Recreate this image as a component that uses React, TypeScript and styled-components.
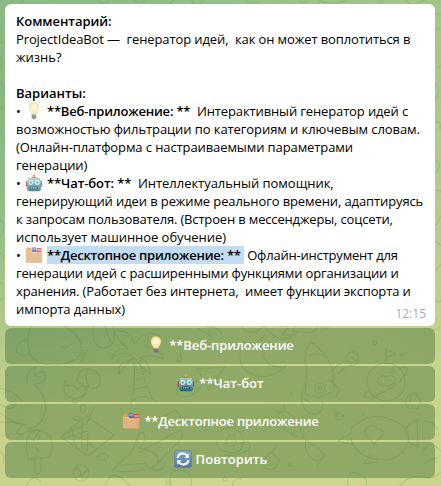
import React from "react";
import styled, { createGlobalStyle } from "styled-components";

const GlobalStyle = createGlobalStyle`
  * { box-sizing: border-box; }
  body { margin: 0; overflow: hidden; }
`;

const Chat = styled.main`
  position: relative;
  width: 441px;
  height: 486px;
  overflow: hidden;
  padding: 4px 6px 8px 5px;
  font: 13px/18px "Open Sans", "Noto Sans", sans-serif;
  color: #000;
  background:
    radial-gradient(ellipse 360px 330px at 0 90px, rgba(134, 182, 132, 0.95), rgba(134, 182, 132, 0)),
    radial-gradient(ellipse 400px 280px at 230px 450px, #d0d68d 0%, rgba(208, 214, 141, 0.85) 45%, rgba(208, 214, 141, 0) 100%),
    linear-gradient(165deg, #99c08a 0%, #b2cb8c 50%, #bccd8b 100%);
`;

const Wallpaper = styled.svg`
  position: absolute;
  inset: 0;
  fill: none;
  stroke: #6d9650;
  stroke-opacity: 0.25;
  stroke-width: 1.15;
  stroke-linecap: round;
  stroke-linejoin: round;
`;

const Message = styled.article`
  position: relative;
  display: flex;
  flex-direction: column;
`;

const Bubble = styled.section`
  display: flex;
  flex-direction: column;
  height: 322px;
  padding: 8px 9px 0 11px;
  border-radius: 6px;
  background: #fff;
`;

const Line = styled.div<{ $track?: number }>`
  display: flex;
  height: 18px;
  white-space: pre;
  letter-spacing: ${({ $track = 0 }) => $track}px;
`;

const Strong = styled.strong<{ $selected?: boolean; $width?: number; $track?: number }>`
  font-weight: 600;
  flex: none;
  width: ${({ $width }) => ($width ? `${$width}px` : "auto")};
  letter-spacing: ${({ $track = 0 }) => $track}px;
  background: ${({ $selected }) => ($selected ? "#c2dcf2" : "transparent")};
`;

const Bullet = styled.span`
  flex: none;
  width: 9px;
`;

const Emoji = styled.svg<{ $faded?: boolean }>`
  flex: none;
  width: 18px;
  height: 18px;
  opacity: ${({ $faded }) => ($faded ? 0.8 : 1)};
`;

const InlineEmoji = styled.span`
  display: flex;
  flex: none;
  width: 22px;
`;

const LastLine = styled.div`
  display: flex;
  justify-content: space-between;
`;

const Time = styled.time`
  height: 18px;
  padding-top: 5px;
  font-size: 12px;
  color: #a0acb6;
`;

const Keyboard = styled.nav`
  display: flex;
  flex-direction: column;
  gap: 2px;
  margin-top: 2px;
`;

const Key = styled.button<{ $track?: number }>`
  display: flex;
  align-items: center;
  justify-content: center;
  gap: 4px;
  height: 36px;
  padding: 0 0 2px 1px;
  border: 0;
  border-radius: 6px;
  background: rgba(69, 115, 58, 0.45);
  color: #fff;
  font: 600 13px/18px "Open Sans", "Noto Sans", sans-serif;
  letter-spacing: ${({ $track = 0 }) => $track}px;
  white-space: pre;
`;

type IconProps = { faded?: boolean };

const Bulb = ({ faded }: IconProps) => (
  <Emoji viewBox="0 0 18 18" $faded={faded}>
    <defs>
      <radialGradient id="glow">
        <stop offset="0" stopColor="#fffdf0" />
        <stop offset=".6" stopColor="#fff1c2" />
        <stop offset="1" stopColor="#f0d08c" />
      </radialGradient>
    </defs>
    <path d="M9 .3C5.8.3 3.8 2.5 3.8 5.3c0 2.9 2.4 4.3 2.9 7.4h4.6c.5-3.1 2.9-4.5 2.9-7.4C14.2 2.5 12.2.3 9 .3Z" fill="url(#glow)" />
    <path d="M7.8 12.3 7.4 8l1.6.8 1.6-.8-.4 4.3" fill="none" stroke="#f0cf8c" strokeWidth=".5" />
    <path d="M6.7 12.5h4.6v3L10 17.2H8l-1.3-1.7Z" fill="#898989" />
    <path d="M6.8 14h4.4M7 15.7h4" stroke="#595f66" strokeWidth=".6" />
  </Emoji>
);

const Robot = ({ faded }: IconProps) => (
  <Emoji viewBox="0 0 18 18" $faded={faded}>
    <defs>
      <linearGradient id="metal" x1="0" y1="0" x2="0" y2="1">
        <stop offset="0" stopColor="#a6cbd0" />
        <stop offset=".6" stopColor="#599ba4" />
        <stop offset="1" stopColor="#236678" />
      </linearGradient>
    </defs>
    <rect x=".8" y="7" width="2" height="6" rx="1" fill="#b84942" />
    <rect x="15.2" y="7" width="2" height="6" rx="1" fill="#b84942" />
    <path d="M6.2 4 8 2.5h2L11.8 4Z" fill="#d74c3d" />
    <circle cx="9" cy="1.6" r="1.4" fill="#f4a52d" />
    <path d="M3.5 3.8h11l1.4 3v8.6l-1.7 1.8H3.8l-1.7-1.8V6.8Z" fill="url(#metal)" />
    <circle cx="5.8" cy="8.5" r="2.4" fill="#d8f2ee" />
    <circle cx="12.2" cy="8.5" r="2.4" fill="#d8f2ee" />
    <circle cx="5.8" cy="8.5" r="1.2" fill="#36bac0" />
    <circle cx="12.2" cy="8.5" r="1.2" fill="#36bac0" />
    <path d="m9 9.5-1.2 2h2.4Z" fill="#dd4d47" />
    <rect x="5" y="12.6" width="8" height="2.6" rx=".8" fill="#214f5c" />
    <path d="M6 13.9h6" stroke="#d7e5e5" strokeDasharray="1.2 .6" />
  </Emoji>
);

const Folder = ({ faded }: IconProps) => (
  <Emoji viewBox="0 0 18 18" $faded={faded}>
    <path d="M1.2 3 2.4 1.5h3L6.5 3v4H1.2Z" fill="#ed9e4d" />
    <path d="M6.8 3V1.5h4.5V3l1 3H6.8Z" fill="#5669c6" />
    <path d="M11.7 2h4.8v5h-4.8Z" fill="#e9524d" />
    <path d="M7.2 3h4m1.2 1H16" stroke="#d7dced" strokeWidth=".8" />
    <path d="M.8 5h6l1 1.5h9.4v10H.8Z" fill="#dfb181" />
    <path d="M1 5.5h5.6l1 1.5H17" fill="none" stroke="#efc798" strokeWidth=".6" />
    <path d="M.8 16.3h16.4" stroke="#cb986b" strokeWidth=".6" />
  </Emoji>
);

const Repeat = () => (
  <Emoji viewBox="0 0 18 18">
    <defs>
      <linearGradient id="tile" x1="0" y1="0" x2="0" y2="1">
        <stop offset="0" stopColor="#84a5c9" />
        <stop offset="1" stopColor="#547aa4" />
      </linearGradient>
    </defs>
    <rect x=".4" y=".4" width="17.2" height="17.2" rx="2.6" fill="url(#tile)" stroke="#57789b" strokeWidth=".6" />
    <path d="M3.6 8C4 5.2 6.1 3.6 8.9 3.6c1.7 0 3 .6 4 1.8M14.4 10c-.4 2.8-2.5 4.4-5.3 4.4-1.7 0-3-.6-4-1.8" fill="none" stroke="#fff" strokeWidth="2" />
    <path d="M15 3.4v4.4h-4.6ZM3 14.6v-4.4h4.6Z" fill="#fff" />
  </Emoji>
);

const Doodles = () => (
  <Wallpaper width="441" height="486" viewBox="0 0 441 486">
    {/* top and side fragments */}
    <path d="M5 8 22-8M15 9 29-5M98 0q6 8 13-2M132-1l8 5 9-7M170 3l9-7M190 0q9 9 15-2M245-3q2 9 13 5M299 1q4 3 8 0M319 0q15 9 32-3M376-5l4 9 7-9M406 0q5 8 14 2t16-5" />
    <path d="M-3 40 4 44M-5 54q8 1 7 9T-4 70M0 82l5 9M436 14h5M434 30q8-1 9-6M435 84q5 3 3 9t-3 8M438 68l3-3M435 122q7-2 5 7M435 160q6 3 4 8t-5 7M437 190q5 0 5 6M436 225l5-9M435 241l7 5M435 272l6-8M435 300q7 5 7-4" />
    <path d="M-3 220q8 0 7 9l-5 10M-3 303q4-5 8-5M0 252l4 6M-2 280l5 5M0 106l5 4" />
    {/* whale */}
    <path d="M31 327q10-12 23-6t19 11q8 6 8 16t-9 13q-17 8-36 0-8-6-8-18t3-16ZM17 353q-2-12 9-13M17 353q7 5 13 0M61 346q5 4 10-2M64 337h.5M77 338h.5M73 353l15-3-7 11" />
    <path d="M107 320q9 6 7 18t-15 9q-8-6-6-19t14-8ZM105 321q-1 13 8 23" />
    {/* palm tree */}
    <path d="M135 358q-13-9-24 1 4-12 17-10-10-9-14-17 15-5 21 12 9-15 25-8-9 3-16 12 16-1 20 12-13-8-24-2 10 4 10 16-11-8-15-16-9 4-16 16-3-11 16-16Z" />
    <path d="M134 362q2 25-3 42M140 362q5 23 13 37M135 370l8-2M134 380l10-2M134 390l14-4M131 402q13-11 26 0" />
    {/* fish */}
    <path d="M28 383q-3-13 7-16v9q6-7 11-2-1 10-12 10 16 15 10 32-3 9-14 13-5 7-14 4l6-8q-20-6-29-1M0 388q15 3 22 13M0 404q12 8 14 2M10 398h1M0 413q11 10 27 12M29 432q5-4 11-2l-6 9" />
    {/* beans and fruit */}
    <path d="M65 380q-5 17 10 18 12-1 12-9-6-6-9 1-3-7-11-4ZM77 381q1-13 12-12 12 3 11 12t-9 7-14-7ZM88 369q-4 9 1 18" />
    <ellipse cx="75" cy="401" rx="3" ry="2" /><ellipse cx="83" cy="409" rx="2.5" ry="4" /><ellipse cx="77" cy="418" rx="3" ry="2" />
    {/* envelope */}
    <path d="m86 416 28 19-26 21-27-19ZM68 433l19-10 7-16M62 439l26-8-1 20M64 433l22 7 9 8M71 427l5 21M82 421v28M99 455q7-3 9 1t-6 4-3-5Z" />
    {/* ice cream and ball */}
    <path d="M27 453q-3-21 10-23 17 2 15 20l-3 7-21 2ZM35 459v13q3 4 6-1v-13M31 438l3 3M40 435l-2 5M36 448l3 3" />
    <circle cx="81" cy="473" r="8" /><path d="M75 469q6-1 8 10M76 477q8-1 11-7" />
    {/* crocodile */}
    <path d="M112 471q8-9 19-18l8-19q5-5 6 3-1 8-6 11 10 1 18 8 4 10-8 12-14 5-37 3ZM140 452l40-22q5 3 1 9l-24 25M136 440l3 3M116 466l30-3M162 417l14-7 5 6-10 9ZM146 465q10 11 20 0" />
    {/* acorn, pizza and clouds */}
    <path d="M177 387q2-10 10-9l16 5q-8 14-18 14t-8-10ZM181 352v8q-4 4-4-1ZM197 369l28-2-16 22ZM199 329l14 8-7 4M206 327q14-1 16 9M214 375l3 3" />
    <path d="M239 323q11 17 25 3 16 23 35 5 17 5 19-7 12 10 13-5M244 342q-11 21 6 31t36-7q-18 4-23-11t2-20l-11 9ZM279 326h10l-7 9h10M290 323h8l-6 8h8" />
    {/* rocket */}
    <path d="M307 370q-5-18 4-28 16 11 21 26l2 23-16 7-13-4ZM309 356q7-4 14 0M305 382l-4 16 9 4M330 380l9 9-3 8M308 400q-9-3-5 6t14 8q9-6 5-13" />
    <circle cx="320" cy="388" r="5" /><circle cx="320" cy="388" r="2" />
    <path d="M332 371q8-10 16-10M338 374q9-10 16-8M346 359q2-10 10-6 7 10-4 13ZM352 357l4 5" />
    {/* planet and stars */}
    <circle cx="386" cy="382" r="19" /><path d="M367 391q-6 9 5 6 29-10 36-28-5-4-10 2M377 382q2-9 9-5 10-4 9 5-8 9-18 0ZM386 361v-12l10 5-10 3" />
    <circle cx="392" cy="371" r="2" /><circle cx="375" cy="343" r="1.8" /><circle cx="402" cy="355" r="1.5" />
    <circle cx="291" cy="394" r="1.5" /><circle cx="363" cy="414" r="1.2" />
    <path d="M337 420q-4-9 5-6 5 5-3 6-5-2-2-5M410 402q-1-7 6-7 8 6 2 13-12 4-13-7 4-10 14-7M406 318q7 7 15 0t15 2M407 324h15M430 332l10-5" />
    {/* carrot and pig */}
    <path d="M280 421q-4-8 3-10 15 4 21 27-17-1-24-17ZM282 414l-7-4M285 412l-1-8M291 425l7-3M292 433l8-2M306 440l20 15q-8 9-13 4-10-6-7-19M324 453l-7 14" />
    <path d="M351 428q21-18 41-8 23 9 14 28-13 18-38 9-20-8-17-29ZM350 434l-12 7 15 4M370 455l-7 9 14-2M405 429l12-10 1 28-10-5M369 438q-8-10 1-11 5-3 7 2 8-1 5 7l-8 8Z" />
    {/* snail, berry and foliage */}
    <path d="M219 432q9-8 18-2t5 17q-4 9-18 4-8-3-7-10M228 446q-5-6 1-10t7 4-8 6ZM239 444q14-7 10 6-11 6-28 6M265 458l6-6 8 7-3 9q-12 4-13-4ZM269 461h.5M273 465h.5M272 452l4-5" />
    <path d="M0 452q6 2 3 11M26 486q7-13 15-4M105 486q5-16 17-8l8 8M171 486q-4-16 9-16 14 2 11 16M232 486q2-9 9-7M348 486q-2-16 9-13 12 5 9 13M400 486q7-11 24-9 10 3 17-5M424 421q9 0 14 8M423 450l8-8 10 9M425 462l12-4" />
    <circle cx="290" cy="464" r="2" /><circle cx="168" cy="482" r="2" /><circle cx="225" cy="479" r="2" />
  </Wallpaper>
);

export default function App() {
  return (
    <>
      <GlobalStyle />
      <Chat>
        <Doodles />
        <Message>
          <Bubble>
            <Line><Strong $track={-0.06}>Комментарий:</Strong></Line>
            <Line $track={-0.11}><span>{"ProjectIdeaBot —  генератор идей,  как он может воплотиться в"}</span></Line>
            <Line><span>жизнь?</span></Line>
            <Line />
            <Line><Strong>Варианты:</Strong></Line>
            <Line $track={-0.13}><Bullet>•</Bullet><InlineEmoji><Bulb faded /></InlineEmoji><Strong $width={150} $track={-0.2}>**Веб-приложение: **</Strong><span>Интерактивный генератор идей с</span></Line>
            <Line $track={-0.08}><span>возможностью фильтрации по категориям и ключевым словам.</span></Line>
            <Line $track={-0.1}><span>(Онлайн-платформа с настраиваемыми параметрами</span></Line>
            <Line $track={-0.08}><span>генерации)</span></Line>
            <Line $track={-0.04}><Bullet>•</Bullet><InlineEmoji><Robot faded /></InlineEmoji><Strong $width={91} $track={-0.1}>**Чат-бот: **</Strong><span>Интеллектуальный помощник,</span></Line>
            <Line $track={-0.11}><span>генерирующий идеи в режиме реального времени, адаптируясь</span></Line>
            <Line $track={-0.16}><span>к запросам пользователя. (Встроен в мессенджеры, соцсети,</span></Line>
            <Line $track={-0.05}><span>использует машинное обучение)</span></Line>
            <Line $track={-0.2}><Bullet>•</Bullet><InlineEmoji><Folder faded /></InlineEmoji><Strong $selected $width={197} $track={-0.23}>{"**Десктопное приложение: ** "}</Strong><span>{" Офлайн-инструмент для"}</span></Line>
            <Line $track={-0.15}><span>генерации идей с расширенными функциями организации и</span></Line>
            <Line $track={-0.14}><span>{"хранения. (Работает без интернета,  имеет функции экспорта и"}</span></Line>
            <LastLine><Line $track={-0.07}><span>импорта данных)</span></Line><Time>12:15</Time></LastLine>
          </Bubble>
          <Keyboard>
            <Key $track={-0.1}><Bulb /><span>**Веб-приложение</span></Key>
            <Key><Robot /><span>**Чат-бот</span></Key>
            <Key $track={-0.2}><Folder /><span>**Десктопное приложение</span></Key>
            <Key $track={0.05}><Repeat /><span>Повторить</span></Key>
          </Keyboard>
        </Message>
      </Chat>
    </>
  );
}
